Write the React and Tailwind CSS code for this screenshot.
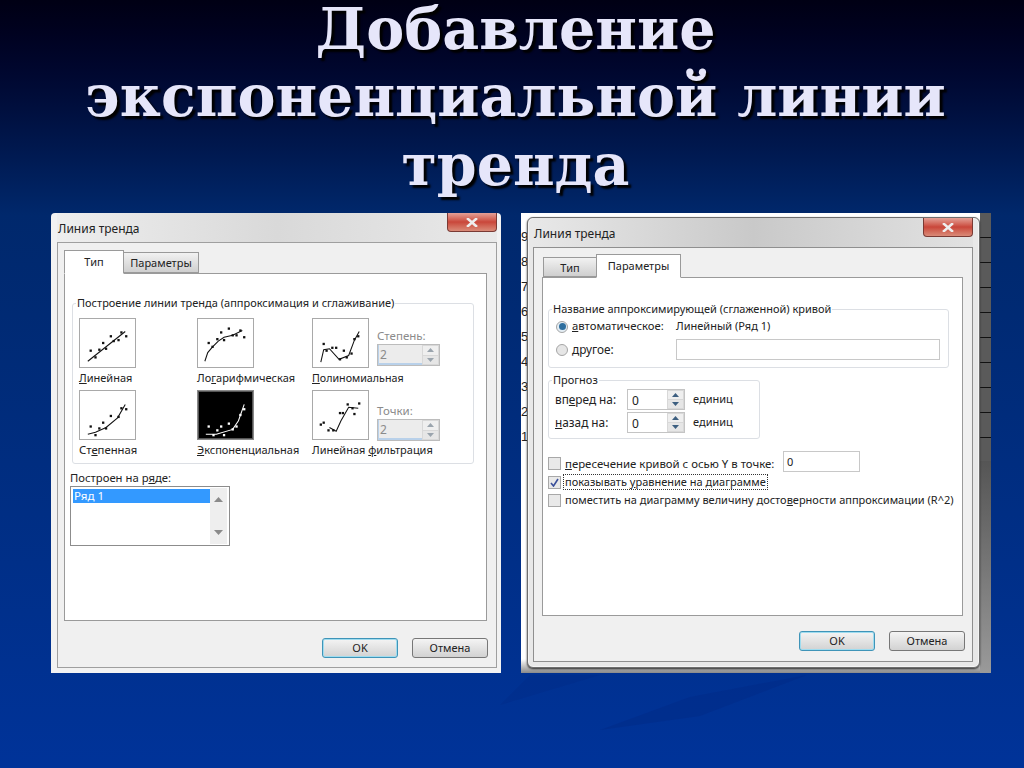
const dlgFont = { fontFamily: '"Noto Sans", "Open Sans", sans-serif' }

const charts = {
  linear: {
    line: '8,44 47,13',
    dots: [[11,33],[16,40],[20,32],[24,25],[27,31],[32,18],[35,23],[40,22],[43,14],[48,18]],
  },
  log: {
    line: '7,44 10,35 15,29 21,23 27,19 36,17 46,12',
    dots: [[11,25],[15,29],[20,21],[24,14],[27,22],[32,10],[36,17],[40,17],[44,12],[48,19]],
  },
  poly: {
    line: '8,45 11,32 17,31 27,42 37,38 43,22 48,13',
    dots: [[11,26],[14,33],[20,30],[24,30],[28,42],[32,33],[35,40],[40,36],[43,21],[47,18]],
  },
  power: {
    line: '8,45 16,43 27,38 39,28 47,14',
    dots: [[11,37],[16,46],[20,39],[24,33],[27,39],[32,26],[40,27],[43,18],[48,19]],
  },
  exp: {
    line: '8,45 19,45 36,40 42,31 48,14',
    dots: [[11,37],[16,46],[20,41],[24,37],[27,46],[32,34],[36,40],[40,37],[44,25],[48,19]],
  },
  moving: {
    line: '17,38 24,42 29,31 37,17 47,18',
    dots: [[8,35],[11,33],[16,41],[21,41],[28,23],[31,23],[36,14],[41,18],[43,24],[48,13]],
  },
}

function Thumb({ kind, selected }) {
  const c = charts[kind]
  const ink = selected ? '#fff' : '#111'
  return (
    <div className={`w-[57px] h-[50px] border ${selected ? 'bg-black border-[#8a8a8a] shadow-[inset_0_0_0_1px_#555]' : 'bg-white border-[#a9a9a9]'}`}>
      <svg viewBox="0 0 57 50" className="w-full h-full block">
        <polyline points={c.line} fill="none" stroke={ink} strokeWidth="1.1" />
        {c.dots.map(([x, y], i) => (
          <rect key={i} x={x - 1.2} y={y - 1.2} width="2.4" height="2.4" fill={ink} />
        ))}
      </svg>
    </div>
  )
}

function ChartOption({ kind, children, selected, size = 'text-[11px]' }) {
  return (
    <div className="flex flex-col w-[57px]">
      <Thumb kind={kind} selected={selected} />
      <span className={`mt-[2px] leading-[16px] text-[#222] whitespace-nowrap ${size}`}>{children}</span>
    </div>
  )
}

function SpinArrows({ disabled }) {
  const fill = disabled ? '#9aa4ad' : '#3d5f80'
  return (
    <div className="w-[17px] flex flex-col gap-px p-px bg-[#d8d8d8]">
      <div className="flex-1 flex items-center justify-center bg-[#efefef]">
        <svg width="7" height="4" viewBox="0 0 7 4"><path d="M3.5 0 7 4H0z" fill={fill} /></svg>
      </div>
      <div className="flex-1 flex items-center justify-center bg-[#e6e6e6]">
        <svg width="7" height="4" viewBox="0 0 7 4"><path d="M0 0h7L3.5 4z" fill={fill} /></svg>
      </div>
    </div>
  )
}

function DisabledSpin({ label }) {
  return (
    <div className="flex flex-col">
      <span className="text-[11.5px] leading-[15px] text-[#8b8b8b]">{label}</span>
      <div className="mt-[1px] flex w-[63px] h-[22px] border border-[#bcbcbc] bg-[#b9d1ea]">
        <div className="flex-1 ml-[1px] mb-[2px] bg-[#ececec] px-[1px] text-[12px] leading-[19px] text-[#8b8b8b]">2</div>
        <SpinArrows disabled />
      </div>
    </div>
  )
}

function Spin() {
  return (
    <div className="flex w-[58px] h-[21px] border border-[#c4c4c4] bg-white">
      <div className="flex-1 pl-[4px] text-[12px] leading-[21px] text-[#222]">0</div>
      <SpinArrows />
    </div>
  )
}

function CloseButton({ className }) {
  return (
    <div className={`absolute flex items-center justify-center top-0 w-[50px] h-[19px] rounded-b-[4px] border border-t-0 border-[#7a3a34] bg-linear-to-b from-[#e2a097] via-[#c9463a] to-[#d98a78] ${className}`}>
      <svg width="12" height="9" viewBox="0 0 12 9">
        <path d="M2 1 10 8M10 1 2 8" stroke="#eeeeee" strokeWidth="2.6" strokeLinecap="square" />
      </svg>
    </div>
  )
}

function Button({ label, primary }) {
  return (
    <div className={`h-[20px] w-[76px] rounded-[3px] border bg-linear-to-b from-[#f4f4f4] to-[#d2d2d2] text-center text-[11px] leading-[18px] text-[#222] ${primary ? 'border-[#3f94b8] shadow-[inset_0_0_0_1px_#9fdcef]' : 'border-[#777]'}`}>
      {label}
    </div>
  )
}

function Tab({ label, active, className }) {
  return (
    <div className={`text-center text-[11px] leading-[20px] border border-[#9a9a9a] ${active ? 'bg-white border-b-white relative z-10 text-[#222]' : 'bg-linear-to-b from-[#f2f2f2] to-[#cfcfcf] text-[#222]'} ${className}`}>
      {label}
    </div>
  )
}

// group box with a caption sitting on its top border
function GroupBox({ title, className, children }) {
  return (
    <div className={`relative border border-[#dcdfe4] rounded-[3px] ${className}`}>
      <span className="absolute -top-[9px] left-[3px] bg-white px-px text-[11px] leading-[16px] text-[#222] whitespace-nowrap">{title}</span>
      {children}
    </div>
  )
}

function TypeDialog() {
  return (
    <section style={dlgFont} className="relative w-[450px] h-[460px] bg-[#f2f2f2] rounded-t-[4px] flex flex-col pb-[5px] pl-[6px] pr-[4px]">
      <CloseButton className="right-[4px]" />
      <div className="h-[29px] shrink-0 pl-px flex items-center pt-[3px] text-[12px] text-[#222] bg-linear-to-r from-[#eeeeee] via-[#d9d9d9] to-[#e9e9e9]">Линия тренда</div>
      <div className="flex-1 border border-[#9f9f9f] bg-[#f0f0f0] flex flex-col pt-[8px] pl-[6px] pr-[9px]">
        <div className="flex items-end h-[22px]">
          <Tab label="Тип" active className="w-[60px] h-[24px] -mb-px leading-[22px]" />
          <Tab label="Параметры" className="w-[76px] h-[21px] -ml-px" />
        </div>
        <div className="h-[348px] border border-[#9a9a9a] bg-white pl-[5px] pr-[12px] pt-[29px]">
          <GroupBox title="Построение линии тренда (аппроксимация и сглаживание)" className="ml-[2px] h-[161px] pt-[14px] pl-[6px]">
            <div className="grid grid-cols-[118px_115px_auto] gap-y-[4px]">
              <ChartOption kind="linear"><u>Л</u>инейная</ChartOption>
              <ChartOption kind="log">Ло<u>г</u>арифмическая</ChartOption>
              <div className="flex gap-[8px]">
                <ChartOption kind="poly" size="text-[10.7px]"><u>П</u>олиномиальная</ChartOption>
                <div className="pt-[10px]"><DisabledSpin label="Степень:" /></div>
              </div>
              <ChartOption kind="power" size="text-[11.3px]">Ст<u>е</u>пенная</ChartOption>
              <ChartOption kind="exp" selected><u>Э</u>кспоненциальная</ChartOption>
              <div className="flex gap-[8px]">
                <ChartOption kind="moving">Линейная <u>ф</u>ильтрация</ChartOption>
                <div className="pt-[13px]"><DisabledSpin label="Точки:" /></div>
              </div>
            </div>
          </GroupBox>
          <div className="mt-[6px] text-[11.3px] leading-[16px] text-[#222]">Построен на р<u>я</u>де:</div>
          <div className="w-[160px] h-[60px] border border-[#8c8c8c] bg-white flex p-[2px]">
            <div className="flex-1">
              <div className="h-[14px] bg-[#3399ff] pl-[1px] text-[11.5px] leading-[14px] text-white">Ряд 1</div>
            </div>
            <div className="w-[17px] -my-[1px] bg-[#eeeeee] flex flex-col items-center justify-between py-[9px]">
              <svg width="9" height="5" viewBox="0 0 9 5"><path d="M4.5 0 9 5H0z" fill="#8a8a8a" /></svg>
              <svg width="9" height="5" viewBox="0 0 9 5"><path d="M0 0h9L4.5 5z" fill="#8a8a8a" /></svg>
            </div>
          </div>
        </div>
        <div className="flex justify-end gap-[14px] mt-[17px] -mr-px">
          <Button label="OK" primary />
          <Button label="Отмена" />
        </div>
      </div>
    </section>
  )
}

function Radio({ checked }) {
  return (
    <span className={`w-[12px] h-[12px] shrink-0 rounded-full border border-[#a5a5a5] flex items-center justify-center ${checked ? 'bg-[#e4eef5]' : 'bg-[#e6e6e6]'}`}>
      {checked && <span className="w-[7px] h-[7px] rounded-full bg-[#2f6f9f]" />}
    </span>
  )
}

function Check({ checked }) {
  return (
    <span className="w-[13px] h-[13px] shrink-0 border border-[#a8a8a8] bg-[#e9e9e9] flex items-center justify-center">
      {checked && (
        <svg width="9" height="9" viewBox="0 0 9 9">
          <path d="M1 5l2.5 3L8 1" fill="none" stroke="#3a4f9a" strokeWidth="1.6" />
        </svg>
      )}
    </span>
  )
}

function ForecastRow({ children }) {
  return (
    <div className="flex items-center h-[21px]">
      <span className="w-[72px] text-[11.8px] text-[#222]">{children}</span>
      <Spin />
      <span className="ml-[8px] text-[11px] text-[#222]">единиц</span>
    </div>
  )
}

function ParamsDialog() {
  return (
    <section style={dlgFont} className="relative w-[453px] h-[451px] mt-[4px] bg-[#e8e8e8] rounded-t-[6px] rounded-b-[6px] border border-[#6e6e6e] flex flex-col pb-[5px] pl-[5px] pr-[6px] shadow-[inset_0_0_0_1px_#f4f4f4,0_1px_2px_#333]">
      <CloseButton className="right-[6px]" />
      <div className="h-[29px] shrink-0 flex items-center pl-[1px] pt-[2px] text-[12px] text-[#222] bg-linear-to-r from-[#e8e8e8] via-[#c9c9c9] to-[#e2e2e2]">Линия тренда</div>
      <div className="flex-1 border border-[#8f8f8f] bg-[#f0f0f0] flex flex-col pt-[7px] pl-[8px] pr-[9px]">
        <div className="flex items-end h-[22px] pl-px">
          <Tab label="Тип" className="w-[54px] h-[20px]" />
          <Tab label="Параметры" active className="w-[85px] h-[24px] -mb-px -ml-px leading-[22px]" />
        </div>
        <div className="h-[339px] border border-[#9a9a9a] bg-white pl-[5px] pr-[13px] pt-[31px]">
          <GroupBox title="Название аппроксимирующей (сглаженной) кривой" className="h-[59px] pl-[7px] pr-[8px] pt-[8px]">
            <div className="flex items-center h-[17px] text-[11px] text-[#222]">
              <Radio checked />
              <span className="ml-[4px] w-[104px] text-[11.3px]"><u>а</u>втоматическое:</span>
              <span>Линейный (Ряд 1)</span>
            </div>
            <div className="flex items-center mt-[4px] h-[21px] text-[11.8px] text-[#222]">
              <Radio />
              <span className="ml-[4px] w-[104px]"><u>д</u>ругое:</span>
              <div className="flex-1 h-[21px] border border-[#c8c8c8] bg-white" />
            </div>
          </GroupBox>
          <GroupBox title="Прогноз" className="mt-[12px] w-[212px] h-[59px] pl-[6px] pt-[8px]">
            <ForecastRow>вп<u>е</u>ред на:</ForecastRow>
            <div className="mt-[2px]"><ForecastRow><u>н</u>азад на:</ForecastRow></div>
          </GroupBox>
          <div className="mt-[12px] flex h-[21px] text-[11.4px] text-[#222]">
            <div className="flex items-center pt-[4px]">
              <Check />
              <span className="ml-[4px] w-[218px] whitespace-nowrap"><u>п</u>ересечение кривой с осью Y в точке:</span>
            </div>
            <div className="w-[77px] h-[21px] border border-[#c8c8c8] pl-[3px] text-[11px] leading-[19px]">0</div>
          </div>
          <div className="mt-[2px] flex items-center h-[16px] text-[11px] text-[#222]">
            <Check checked />
            <span className="ml-[2px] px-px leading-[14px] border border-dotted border-[#333]">показывать <u>у</u>равнение на диаграмме</span>
          </div>
          <div className="mt-[2px] flex items-center h-[16px] text-[11px] text-[#222]">
            <Check />
            <span className="ml-[4px] whitespace-nowrap">поместить на диаграмму величину досто<u>в</u>ерности аппроксимации (R^2)</span>
          </div>
        </div>
        <div className="flex justify-end gap-[14px] mt-[15px] -mr-[2px]">
          <Button label="OK" primary />
          <Button label="Отмена" />
        </div>
      </div>
    </section>
  )
}

export default function App() {
  return (
    <div className="relative w-[1024px] h-[768px] overflow-hidden bg-linear-to-b from-[#000014] via-[#00286c] via-[28%] to-[#003399]">
      {/* faint swoosh in the slide background */}
      <svg className="absolute inset-0" width="1024" height="768" viewBox="0 0 1024 768">
        <polygon points="600,730 690,697 807,675 700,716" fill="#002b88" opacity="0.6" />
        <polygon points="500,705 600,675 530,675" fill="#002b88" opacity="0.4" />
      </svg>
      <h1 className="relative h-[213px] pl-[7px] text-center font-bold text-[57px] text-[#e6e6fa] [font-family:'DejaVu_Serif',serif] [text-shadow:3px_3px_2px_#000]">
        <span className="block leading-[58px]">Добавление</span>
        <span className="block leading-[69px] mt-[3px]">экспоненциальной линии</span>
        <span className="block leading-[69px]">тренда</span>
      </h1>
      <div className="relative flex pl-[51px] gap-[20px]">
        <TypeDialog />
        <div className="w-[470px] h-[460px] flex bg-linear-to-b from-white via-white via-[97%] to-[#8a8a8a]">
          <div className="w-[6px] overflow-hidden flex flex-col pt-[15px] gap-[7px] text-[13px] leading-[18px] text-[#222] [font-family:'Liberation_Sans',sans-serif]">
            {[9, 8, 7, 6, 5, 4, 3, 2, 1].map(n => <span key={n}>{n}</span>)}
          </div>
          <ParamsDialog />
          <div className="flex-1 flex flex-col">
            <div className="h-[248px] bg-[#555] bg-[repeating-linear-gradient(180deg,#5a5a5a_0,#5a5a5a_24px,#111_24px,#111_25px)]" />
            <div className="flex-1 bg-linear-to-b from-[#555] to-[#9a9a9a]" />
          </div>
        </div>
      </div>
    </div>
  )
}
